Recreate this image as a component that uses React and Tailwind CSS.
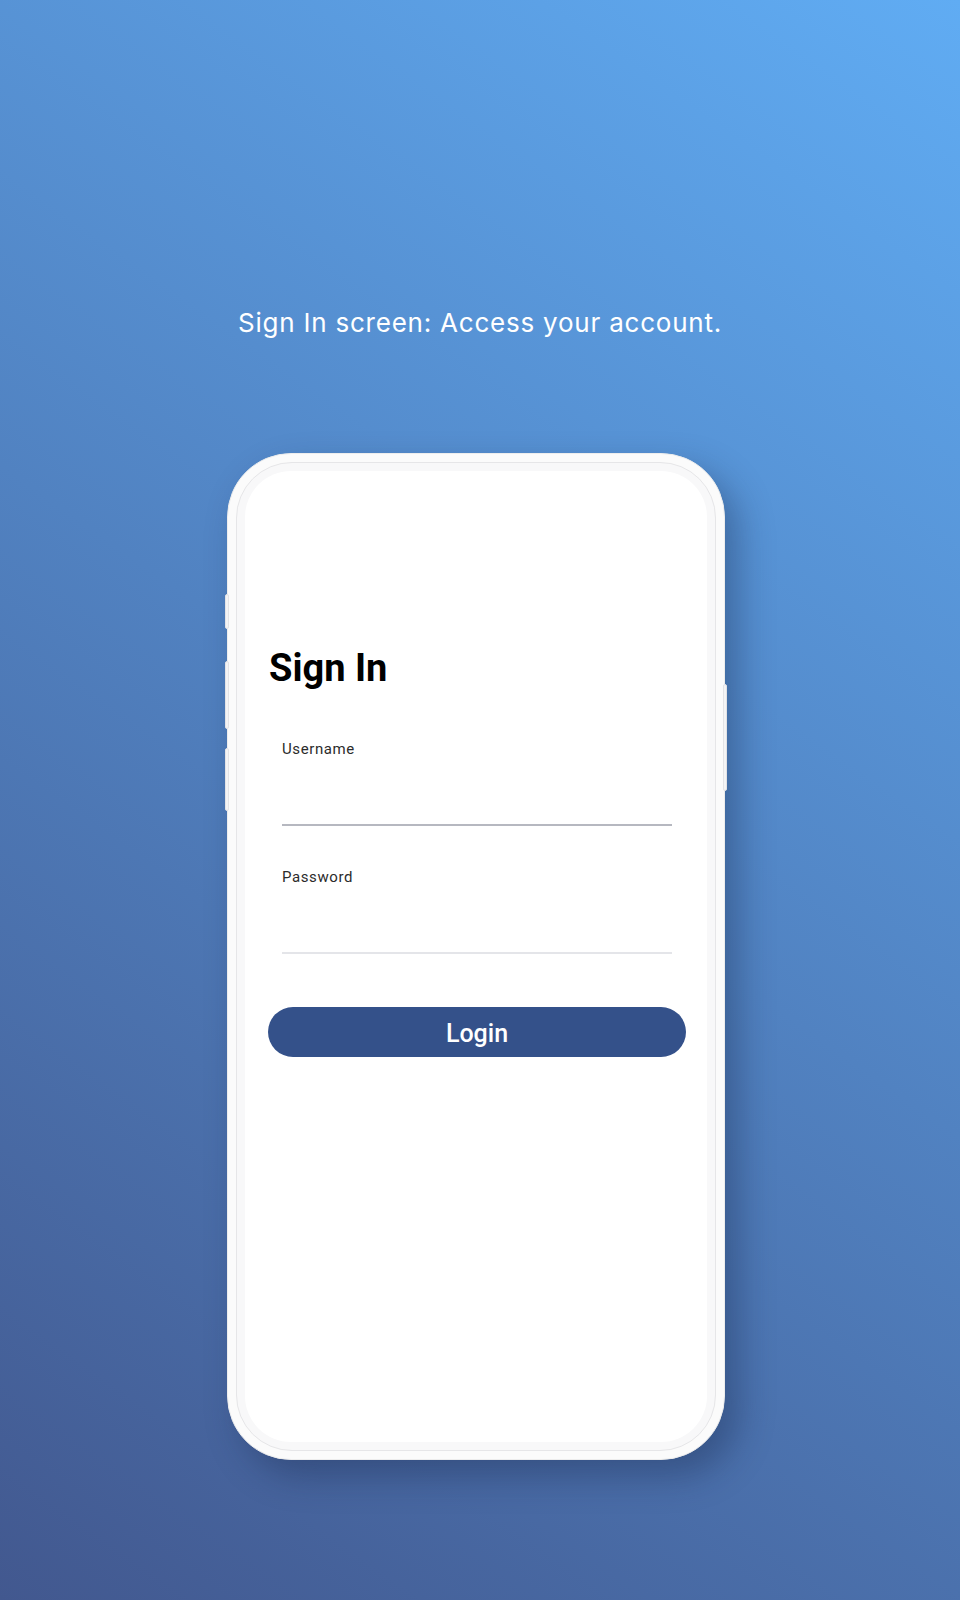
import React from 'react';

// Side keys on the phone frame (they sit over the frame edge)
const SideKey = ({ className }) => (
    <div className={`absolute w-[4px] rounded-[2px] bg-[#f4f4f5] border border-[#e3e3e6] ${className}`} />
);

const Field = ({ label, lineClass }) => (
    <div className="mx-[35px] pl-[2px]">
        <label className="block text-[15px] leading-[16px] tracking-[0.04em] text-[#2b2b2b]">{label}</label>
        <div className={`h-[69px] border-b-2 ${lineClass}`} />
    </div>
);

const App = () => {
    return (
        <div className="min-h-[1600px] w-full bg-[linear-gradient(35deg,#42588f_0%,#60acf3_100%)] flex flex-col items-center pt-[307px]">
            <p className="font-['Inter',sans-serif] font-normal text-[26px] leading-[32px] tracking-[0.03em] text-white">
                Sign In screen: Access your account.
            </p>

            {/* phone mockup */}
            <div className="relative mt-[114px] mr-2 w-[498px] h-[1007px] rounded-[64px] bg-[#fbfbfb] border border-[#ededed] p-[8px] shadow-[14px_16px_34px_rgba(20,35,70,0.35)]">
                <SideKey className="-left-[3px] top-[140px] h-[35px]" />
                <SideKey className="-left-[3px] top-[207px] h-[68px]" />
                <SideKey className="-left-[3px] top-[294px] h-[63px]" />
                <SideKey className="-right-[3px] top-[230px] h-[107px]" />

                <div className="h-full rounded-[56px] border border-[#e6e6e8] bg-[#f8f8f9] p-[8px]">
                    <div className="h-full rounded-[46px] bg-white font-['Roboto',sans-serif] pt-[178px] flex flex-col">
                        <h1 className="ml-[24px] mb-[54px] text-[38px] leading-[38px] font-bold text-black">Sign In</h1>

                        <div className="flex flex-col gap-[43px]">
                            <Field label="Username" lineClass="border-[#b6b8c0]" />
                            <Field label="Password" lineClass="border-[#e4e5e9]" />
                        </div>

                        <button className="mt-[53px] ml-[23px] mr-[21px] h-[50px] pt-[3px] rounded-full bg-[#34518a] text-white text-[25px] font-medium flex items-center justify-center">
                            Login
                        </button>
                    </div>
                </div>
            </div>
        </div>
    );
};

export default App;
